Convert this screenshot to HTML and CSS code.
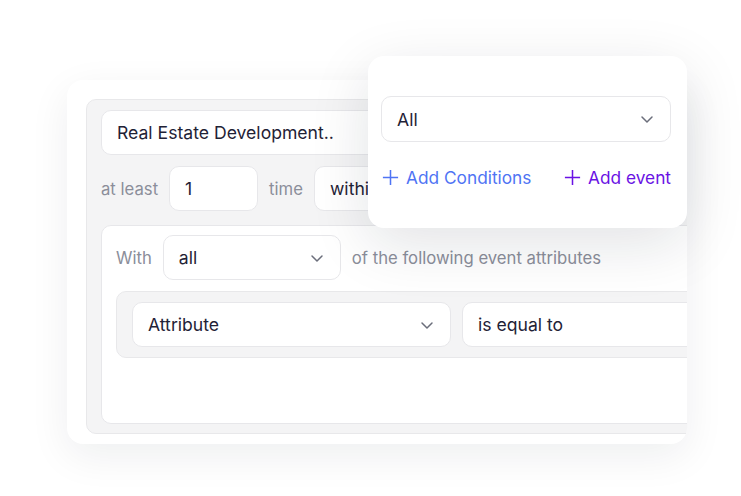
FILE: index.html
```html
<!DOCTYPE html>
<html lang="en">
<head>
  <meta charset="UTF-8">
  <title>Event conditions</title>
  <link rel="stylesheet" href="styles.css">
</head>
<body>

  <div class="stage">
    <div class="card">
      <div class="panel">
        <div class="field field-wide">Real Estate Development..</div>

        <div class="row">
          <span class="label">at least</span>
          <div class="field field-count">1</div>
          <span class="label">time</span>
          <div class="field field-within">within</div>
        </div>

        <div class="group">
          <div class="row">
            <span class="label">With</span>
            <div class="field select select-all">
              <span>all</span>
              <svg class="chevron" viewBox="0 0 16 16"><path d="M3 6l5 5 5-5"/></svg>
            </div>
            <span class="label">of the following event attributes</span>
          </div>

          <div class="condition">
            <div class="field select select-attr">
              <span>Attribute</span>
              <svg class="chevron" viewBox="0 0 16 16"><path d="M3 6l5 5 5-5"/></svg>
            </div>
            <div class="field select-op">is equal to</div>
          </div>
        </div>
      </div>
    </div>

    <!-- popover over the builder -->
    <div class="popover">
      <div class="field select select-popover">
        <span>All</span>
        <svg class="chevron" viewBox="0 0 16 16"><path d="M3 6l5 5 5-5"/></svg>
      </div>
      <div class="actions">
        <a class="action action-blue">
          <svg class="plus" viewBox="0 0 20 20"><path d="M10 2v16M2 10h16"/></svg>
          Add Conditions
        </a>
        <a class="action action-purple">
          <svg class="plus" viewBox="0 0 20 20"><path d="M10 2v16M2 10h16"/></svg>
          Add event
        </a>
      </div>
    </div>
  </div>

</body>
</html>
```

FILE: styles.css
```css
* {
  margin: 0;
  padding: 0;
  box-sizing: border-box;
  font-family: 'Inter', 'Noto Sans', sans-serif;
}
body {
  background: #ffffff;
  width: 741px;
  height: 496px;
  overflow: hidden;
}

.stage {
  position: relative;
  height: 496px;
  padding: 80px 0 0 67px;
}

.card {
  width: 620px;
  height: 364px;
  background: #ffffff;
  border-radius: 16px;
  box-shadow: 0 12px 40px rgba(20, 24, 40, 0.07);
  padding: 19px 0 0 19px;
  overflow: hidden;
}

.panel {
  width: 640px;
  height: 335px;
  background: #f4f4f5;
  border: 1px solid #e8e8ea;
  border-radius: 10px;
  padding: 10px 14px 9px 14px;
  display: flex;
  flex-direction: column;
  gap: 11px;
}

.field {
  height: 45px;
  background: #ffffff;
  border: 1px solid #e7e7ea;
  border-radius: 10px;
  padding: 0 15px;
  display: flex;
  align-items: center;
  font-size: 17.6px;
  color: #1f2236;
  flex-shrink: 0;
}
.field-wide { width: 400px; }
.field-count { width: 89px; }
.field-within { width: 120px; }

.row {
  display: flex;
  align-items: center;
  gap: 11px;
}
.label {
  font-size: 16.7px;
  color: #8b8e9a;
  white-space: nowrap;
}

.select {
  justify-content: space-between;
}
.chevron {
  width: 16px;
  height: 16px;
  fill: none;
  stroke: #6b6e7b;
  stroke-width: 1.5;
  stroke-linecap: round;
  stroke-linejoin: round;
}

/* attribute group */
.group {
  margin-top: 3px;
  width: 620px;
  height: 200px;
  background: #ffffff;
  border: 1px solid #e7e7ea;
  border-radius: 10px;
  padding: 9px 14px;
  display: flex;
  flex-direction: column;
  gap: 11px;
}
.select-all { width: 178px; }

.condition {
  height: 67px;
  background: #f4f4f5;
  border: 1px solid #e8e8ea;
  border-radius: 10px;
  padding: 10px 15px;
  display: flex;
  gap: 11px;
}
.select-attr { width: 319px; }
.select-op { width: 260px; }

/* popover */
.popover {
  position: absolute;
  left: 368px;
  top: 56px;
  width: 319px;
  height: 172px;
  background: #ffffff;
  border-radius: 16px;
  box-shadow: 0 16px 60px rgba(20, 24, 40, 0.12);
  padding: 40px 16px 0 13px;
}
.select-popover {
  width: 290px;
  height: 46px;
}

.actions {
  display: flex;
  justify-content: space-between;
  margin-top: 25px;
  width: 290px;
}
.action {
  display: flex;
  align-items: center;
  gap: 6px;
  font-size: 17.3px;
  cursor: pointer;
}
.action-blue { color: #4f74f4; }
.action-purple { color: #6a12e4; }
.plus {
  width: 19px;
  height: 19px;
  fill: none;
  stroke: currentColor;
  stroke-width: 1.6;
}
```
